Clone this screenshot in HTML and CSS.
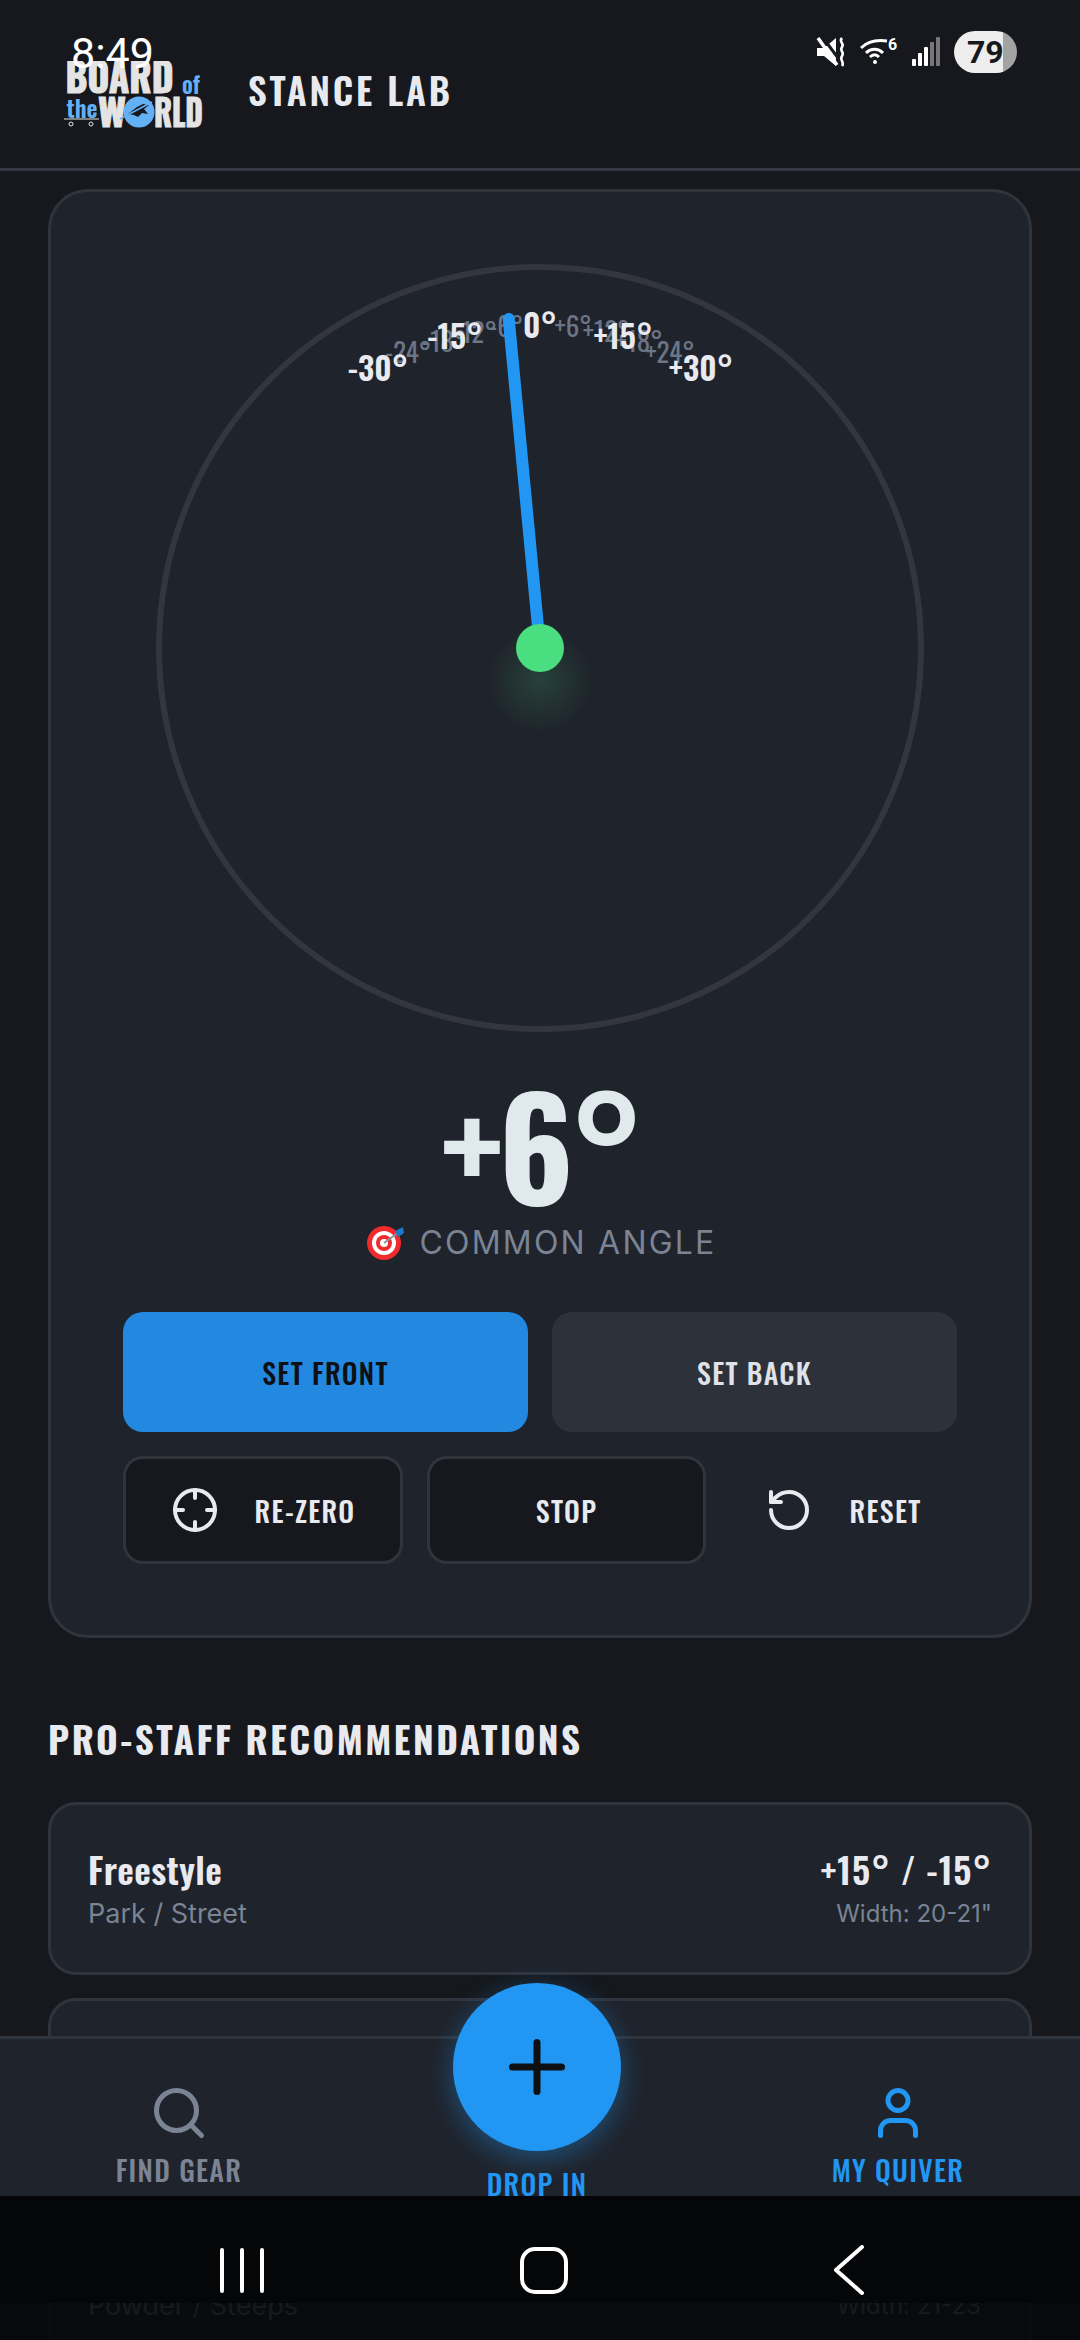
FILE: index.html
```html
<!DOCTYPE html>
<html>
<head>
    <title>Stance Lab</title>
    <link rel="stylesheet" href="styles.css">
</head>
<body>
    <div class="status-bar">
        <span class="time">8:49</span>
        <div class="status-icons">
            <svg width="30" height="30" viewBox="0 0 30 30" fill="#fff">
                <path d="M1 11h7L20 1v28L8 19H1z"/>
                <path d="M5 -2l20 27" stroke="#16181d" stroke-width="3"/>
                <path d="M2 1l19 27" stroke="#fff" stroke-width="3.5"/>
                <path d="M26 1c-4 4 3 5 0 9s3 5 0 9 3 6 0 10" fill="none" stroke="#fff" stroke-width="2.6"/>
            </svg>
            <svg class="wifi" width="38" height="28" viewBox="0 0 38 28" fill="none" stroke="#fff" stroke-width="3">
                <path d="M1 11c8-8 19-8 26-7"/>
                <path d="M6 16c5-5 12-5 17 0"/>
                <path d="M10 20c3-3 6-3 9 0"/>
                <circle cx="15" cy="25" r="2" fill="#fff" stroke="none"/>
                <text x="28" y="13" class="wifi-num">6</text>
            </svg>
            <svg class="signal" width="28" height="30" viewBox="0 0 28 30">
                <rect x="0" y="22" width="4" height="7" rx="1" fill="#fff"/>
                <rect x="6" y="16" width="4" height="13" rx="1" fill="#fff"/>
                <rect x="12" y="10" width="4" height="19" rx="1" fill="#fff"/>
                <rect x="18" y="5" width="4" height="24" rx="1" fill="#777"/>
                <rect x="24" y="0" width="4" height="29" rx="1" fill="#777"/>
            </svg>
            <div class="battery"><span>79</span></div>
        </div>
    </div>

    <header class="top-bar">
        <svg class="logo" width="145" height="72" viewBox="0 0 145 72">
            <text x="3.5" y="32" class="logo-big" textLength="108" lengthAdjust="spacingAndGlyphs">BOARD</text>
            <text x="120" y="33" class="logo-small" textLength="18" lengthAdjust="spacingAndGlyphs">of</text>
            <text x="4.5" y="57" class="logo-small" textLength="31" lengthAdjust="spacingAndGlyphs">the</text>
            <text x="36" y="66" class="logo-big logo-world" textLength="28" lengthAdjust="spacingAndGlyphs">W</text>
            <text x="92" y="66" class="logo-big logo-world" textLength="49" lengthAdjust="spacingAndGlyphs">RLD</text>
            <circle cx="77" cy="51" r="15.5" fill="#64b0f5"/>
            <path d="M66 53l9-7 6-3 6 1-5 4 4 5-6-1-4 4-4-2z" fill="#16181d"/>
            <path d="M58 58l32-17" stroke="#64b0f5" stroke-width="1.5"/>
            <path d="M2 58h35" stroke="#e4e4e4" stroke-width="1.2"/>
            <circle cx="9" cy="63" r="2" fill="none" stroke="#e4e4e4"/>
            <circle cx="29" cy="63" r="2" fill="none" stroke="#e4e4e4"/>
        </svg>
        <h1>STANCE LAB</h1>
    </header>

    <main class="content">
        <section class="card">
            <svg class="dial" width="768" height="768" viewBox="0 0 768 768">
                <defs>
                    <radialGradient id="glow">
                        <stop offset="0" stop-color="#4ade80" stop-opacity="0.16"/>
                        <stop offset="1" stop-color="#4ade80" stop-opacity="0"/>
                    </radialGradient>
                </defs>
                <circle cx="384" cy="384" r="381" class="dial-ring"/>
                <text x="252" y="99" class="tick-minor">-24°</text>
                <text x="288" y="88" class="tick-minor">-18°</text>
                <text x="319" y="79" class="tick-minor">-12°</text>
                <text x="350" y="73" class="tick-minor">-6°</text>
                <text x="417" y="73" class="tick-minor">+6°</text>
                <text x="450" y="78" class="tick-minor">+12°</text>
                <text x="483" y="88" class="tick-minor">+18°</text>
                <text x="514" y="99" class="tick-minor">+24°</text>
                <text x="222" y="117" class="tick-major">-30°</text>
                <text x="299" y="85" class="tick-major">-15°</text>
                <text x="384" y="74" class="tick-major">0°</text>
                <text x="467" y="85" class="tick-major">+15°</text>
                <text x="545" y="117" class="tick-major">+30°</text>
                <circle cx="384" cy="416" r="54" fill="url(#glow)"/>
                <line x1="384" y1="384" x2="352.7" y2="55" class="needle"/>
                <circle cx="384" cy="384" r="24" fill="#4ade80"/>
            </svg>

            <div class="angle-value">+6°</div>
            <div class="angle-label">
                <svg width="38" height="38" viewBox="0 0 38 38">
                    <circle cx="17" cy="20" r="17" fill="#ef2b2d"/>
                    <circle cx="17" cy="20" r="12" fill="#fff"/>
                    <circle cx="17" cy="20" r="8" fill="#ef2b2d"/>
                    <circle cx="17" cy="20" r="4" fill="#fff"/>
                    <path d="M17 20l15-11" stroke="#8a949e" stroke-width="2"/>
                    <path d="M28 8l8-4 1 6-6 4z" fill="#1e78c8"/>
                </svg>
                <span>COMMON ANGLE</span>
            </div>

            <div class="btn-row-main">
                <button class="btn btn-primary">SET FRONT</button>
                <button class="btn btn-muted">SET BACK</button>
            </div>
            <div class="btn-row-tools">
                <button class="btn btn-outline">
                    <svg class="lucide" width="48" height="48" viewBox="0 0 24 24">
                        <circle cx="12" cy="12" r="10"/>
                        <path d="M22 12h-4M6 12H2M12 6V2M12 22v-4"/>
                    </svg>
                    RE-ZERO
                </button>
                <button class="btn btn-outline">STOP</button>
                <button class="btn btn-plain">
                    <svg class="lucide" width="48" height="48" viewBox="0 0 24 24">
                        <path d="M3 12a9 9 0 1 0 9-9 9.75 9.75 0 0 0-6.74 2.74L3 8"/>
                        <path d="M3 3v5h5"/>
                    </svg>
                    RESET
                </button>
            </div>
        </section>

        <h2 class="section-title">PRO-STAFF RECOMMENDATIONS</h2>

        <div class="rec-list">
            <div class="rec-card">
                <div>
                    <div class="rec-name">Freestyle</div>
                    <div class="rec-sub">Park / Street</div>
                </div>
                <div class="rec-right">
                    <div class="rec-angle">+15° / -15°</div>
                    <div class="rec-sub rec-width">Width: 20-21"</div>
                </div>
            </div>
            <div class="rec-card"></div>
            <div class="rec-card">
                <div>
                    <div class="rec-name">&nbsp;</div>
                    <div class="rec-sub">Powder / Steeps</div>
                </div>
                <div class="rec-right">
                    <div class="rec-angle">&nbsp;</div>
                    <div class="rec-sub rec-width">Width: 21-23"</div>
                </div>
            </div>
        </div>
    </main>

    <nav class="bottom-nav">
        <div class="nav-item">
            <svg class="lucide" width="60" height="60" viewBox="0 0 24 24">
                <circle cx="11" cy="11" r="8"/>
                <path d="m21 21-4.3-4.3"/>
            </svg>
            <span>FIND GEAR</span>
        </div>
        <div class="nav-item nav-center">
            <div class="fab">
                <svg class="lucide" width="84" height="84" viewBox="0 0 24 24">
                    <path d="M5 12h14M12 5v14"/>
                </svg>
            </div>
            <span>DROP IN</span>
        </div>
        <div class="nav-item nav-active">
            <svg class="lucide" width="60" height="60" viewBox="0 0 24 24">
                <path d="M19 21v-2a4 4 0 0 0-4-4H9a4 4 0 0 0-4 4v2"/>
                <circle cx="12" cy="7" r="4"/>
            </svg>
            <span>MY QUIVER</span>
        </div>
    </nav>

    <div class="system-nav">
        <div class="recents"><i></i><i></i><i></i></div>
        <div class="home"></div>
        <svg class="back" width="32" height="50" viewBox="0 0 32 50">
            <path d="M29 2L3 25l26 23"/>
        </svg>
    </div>
</body>
</html>
```

FILE: styles.css
```css
* {
    box-sizing: border-box;
}

body {
    margin: 0;
    width: 1080px;
    height: 2340px;
    overflow: hidden;
    position: relative;
    background: #16181d;
    color: #e8eaf0;
    font-family: 'Inter', sans-serif;
}

.status-bar {
    position: absolute;
    top: 28px;
    left: 0;
    right: 0;
    z-index: 5;
    display: flex;
    justify-content: space-between;
    align-items: flex-start;
    padding: 0 63px 0 71px;
}

.time {
    padding-top: 2px;
    font-family: 'Roboto', sans-serif;
    font-size: 43px;
    line-height: 46px;
    color: #fff;
}

.status-icons {
    display: flex;
    align-items: flex-start;
    gap: 14px;
    padding-top: 3px;
}

.status-icons svg {
    margin-top: 6px;
}

.wifi-num {
    font-family: 'Roboto', sans-serif;
    font-size: 16px;
    font-weight: 700;
    fill: #fff;
    stroke: none;
}

.battery {
    width: 63px;
    height: 42px;
    border-radius: 21px;
    background: linear-gradient(90deg, #eee 49px, #a3a3a3 49px);
    color: #16181d;
    font-family: 'Roboto', sans-serif;
    font-size: 32px;
    font-weight: 700;
    line-height: 42px;
    padding-left: 13px;
}

.top-bar {
    height: 171px;
    display: flex;
    align-items: center;
    gap: 41px;
    padding: 8px 0 0 62px;
    border-bottom: 3px solid #333842;
    background: #16181d;
}

.logo {
    margin-top: 17px;
}

.logo-big {
    font-family: 'Oswald', sans-serif;
    font-weight: 700;
    font-size: 41px;
    fill: #e4e4e4;
    stroke: #e4e4e4;
    stroke-width: 1;
}

.logo-world {
    font-size: 38px;
}

.logo-small {
    font-family: 'Oswald', sans-serif;
    font-weight: 600;
    font-size: 23px;
    fill: #64b0f5;
}

h1 {
    margin: 2px 0 0;
    font-family: 'Oswald', sans-serif;
    font-size: 37px;
    font-weight: 600;
    letter-spacing: 2.8px;
    color: #e8eaf0;
}

.content {
    padding: 18px 48px 0;
}

.card {
    height: 1449px;
    padding: 72px 72px 0;
    background: #1f232b;
    border: 3px solid #30343d;
    border-radius: 40px;
}

.dial {
    display: block;
    margin: 0 auto;
    overflow: visible;
}

.dial-ring {
    fill: none;
    stroke: #33363f;
    stroke-width: 6;
}

.tick-major,
.tick-minor {
    text-anchor: middle;
    font-family: 'Oswald', sans-serif;
}

.tick-major {
    font-size: 32px;
    font-weight: 600;
    fill: #e8eaf0;
}

.tick-minor {
    font-size: 27px;
    fill: #6b7585;
}

.needle {
    stroke: #2196f3;
    stroke-width: 12;
    stroke-linecap: round;
}

.angle-value {
    margin-top: 35px;
    text-align: center;
    font-family: 'Oswald', sans-serif;
    font-size: 140px;
    font-weight: 700;
    line-height: 150px;
    letter-spacing: -5px;
    color: #e0eaec;
}

.angle-label {
    display: flex;
    justify-content: center;
    align-items: center;
    gap: 14px;
    height: 40px;
    margin-top: 5px;
    padding-left: 4px;
    font-size: 32px;
    letter-spacing: 2.2px;
    color: #7a8494;
}

.btn {
    display: flex;
    align-items: center;
    justify-content: center;
    border: none;
    font-family: 'Oswald', sans-serif;
    font-size: 28px;
    font-weight: 500;
    letter-spacing: 1.3px;
}

.btn-row-main {
    display: grid;
    grid-template-columns: 1fr 1fr;
    gap: 24px;
    margin-top: 50px;
}

.btn-row-main .btn {
    height: 120px;
    border-radius: 20px;
}

.btn-primary {
    background: #2288e0;
    color: #0e1014;
}

.btn-muted {
    background: #2d313a;
    color: #dfe2e8;
}

.btn-row-tools {
    display: grid;
    grid-template-columns: 280px 279px 1fr;
    gap: 24px;
    margin-top: 24px;
}

.btn-row-tools .btn {
    height: 108px;
    gap: 36px;
    border-radius: 20px;
    color: #e8eaf0;
}

.btn-outline {
    background: #16181d;
    border: 3px solid #30343d;
}

.btn-plain {
    background: transparent;
}

.lucide {
    fill: none;
    stroke: currentColor;
    stroke-width: 2;
    stroke-linecap: round;
    stroke-linejoin: round;
}

.section-title {
    margin: 77px 0 39px;
    font-family: 'Oswald', sans-serif;
    font-size: 37px;
    font-weight: 700;
    line-height: 48px;
    letter-spacing: 2.5px;
    color: #e8eaf0;
}

.rec-list {
    display: flex;
    flex-direction: column;
    gap: 23px;
}

.rec-card {
    height: 173px;
    display: flex;
    justify-content: space-between;
    align-items: center;
    padding: 0 37px;
    background: #1f232b;
    border: 3px solid #30343d;
    border-radius: 28px;
}

.rec-name,
.rec-angle {
    font-family: 'Oswald', sans-serif;
    font-size: 36px;
    font-weight: 600;
    line-height: 44px;
}

.rec-name {
    letter-spacing: 0.4px;
}

.rec-angle {
    letter-spacing: 0.9px;
}

.rec-sub {
    margin-top: 6px;
    font-size: 27px;
    line-height: 34px;
    color: #7a8494;
}

.rec-width {
    font-size: 24px;
}

.rec-right {
    text-align: right;
}

.bottom-nav {
    position: absolute;
    left: 0;
    right: 0;
    top: 2036px;
    height: 204px;
    z-index: 2;
    display: grid;
    grid-template-columns: 358px 358px 364px;
    background: #1f232b;
    border-top: 3px solid #30343d;
}

.nav-item {
    display: flex;
    flex-direction: column;
    align-items: center;
    padding-top: 44px;
    color: #7a8494;
    font-family: 'Oswald', sans-serif;
    font-size: 28px;
    font-weight: 500;
    letter-spacing: 1.3px;
    line-height: 36px;
}

.nav-item span {
    margin-top: 9px;
}

.nav-active {
    color: #2196f3;
}

.nav-center {
    padding-top: 0;
    color: #2196f3;
}

.nav-center span {
    margin-top: 15px;
}

.fab {
    width: 168px;
    height: 168px;
    margin-top: -56px;
    display: flex;
    align-items: center;
    justify-content: center;
    border-radius: 50%;
    background: #2196f3;
    color: #0e1014;
    box-shadow: 0 8px 28px rgba(33, 150, 243, 0.4);
}

.system-nav {
    position: absolute;
    left: 0;
    right: 0;
    bottom: 0;
    height: 144px;
    z-index: 3;
    display: grid;
    grid-template-columns: 1fr 1fr 1fr;
    background: linear-gradient(#050608 107px, rgba(5, 6, 8, 0.85) 107px);
}

.recents {
    display: flex;
    gap: 16px;
    justify-content: flex-end;
    align-self: start;
    margin-top: 52px;
    padding-right: 96px;
}

.recents i {
    width: 4px;
    height: 45px;
    border-radius: 2px;
    background: #fff;
}

.home {
    width: 48px;
    height: 47px;
    margin: 51px 0 0 160px;
    border: 4px solid #fff;
    border-radius: 15px;
}

.back {
    margin: 49px 0 0 113px;
    fill: none;
    stroke: #fff;
    stroke-width: 4;
    stroke-linecap: round;
    stroke-linejoin: round;
}
```
